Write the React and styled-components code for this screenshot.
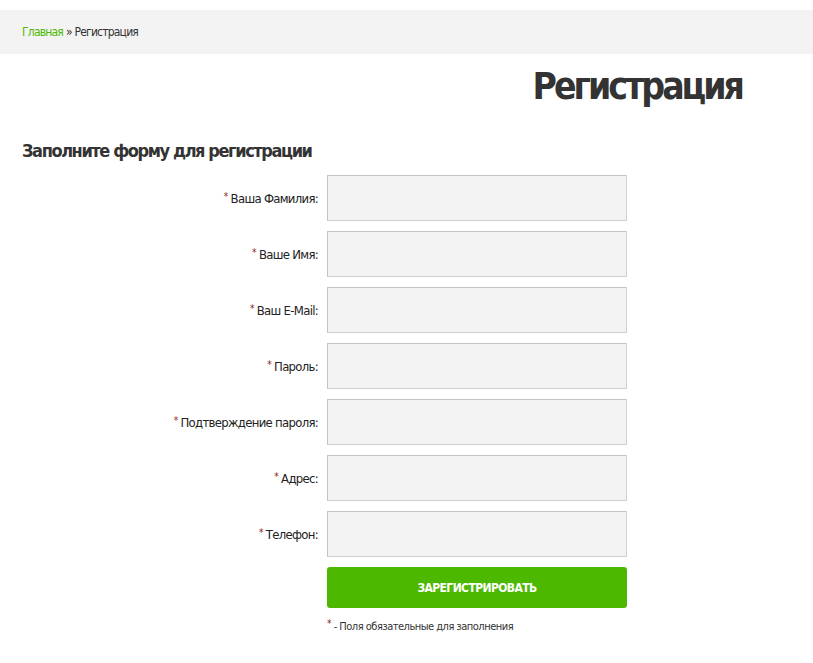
import styled, { createGlobalStyle } from "styled-components";

const GlobalStyle = createGlobalStyle`
  body {
    margin: 0;
    background: #fff;
    font-family: "DejaVu Sans", sans-serif;
    font-stretch: condensed;
    color: #333;
  }
`;

const fields = [
  "Ваша Фамилия:",
  "Ваше Имя:",
  "Ваш E-Mail:",
  "Пароль:",
  "Подтверждение пароля:",
  "Адрес:",
  "Телефон:",
];

function App() {
  return (
    <Page>
      <GlobalStyle />
      <Breadcrumbs>
        <a href="#">Главная</a> » Регистрация
      </Breadcrumbs>
      <Title>Регистрация</Title>
      <SubTitle>Заполните форму для регистрации</SubTitle>
      <Form>
        {fields.map((label) => (
          <Row key={label}>
            <Label>
              <Star>*</Star> {label}
            </Label>
            <Input type="text" />
          </Row>
        ))}
        <Row>
          <span />
          <Submit type="button">Зарегистрировать</Submit>
        </Row>
        <Row>
          <span />
          <Note>
            <Star>*</Star> - Поля обязательные для заполнения
          </Note>
        </Row>
      </Form>
    </Page>
  );
}

const Page = styled.div`
  padding-top: 10px;
`;

const Breadcrumbs = styled.div`
  background: #f3f3f3;
  height: 44px;
  padding: 0 22px;
  display: flex;
  align-items: center;
  gap: 3px;
  font-size: 12px;
  letter-spacing: -0.8px;
  color: #333;
  a {
    color: #4cb800;
    text-decoration: none;
  }
`;

const Title = styled.h1`
  margin: 8px 71px 0 0;
  text-align: right;
  font-size: 37px;
  letter-spacing: -3px;
  line-height: 50px;
  font-weight: bold;
  color: #333;
`;

const SubTitle = styled.h2`
  margin: 26px 0 0 22px;
  font-size: 18px;
  letter-spacing: -1.4px;
  line-height: 26px;
  font-weight: bold;
  color: #333;
`;

const Form = styled.div`
  margin-top: 11px;
  display: flex;
  flex-direction: column;
  gap: 10px;
`;

const Row = styled.div`
  display: grid;
  grid-template-columns: 318px 300px;
  column-gap: 9px;
  align-items: center;
`;

const Label = styled.label`
  text-align: right;
  font-size: 13px;
  letter-spacing: -0.7px;
  color: #222;
`;

const Star = styled.span`
  color: #8b1a1a;
  font-size: 10px;
  vertical-align: 3px;
`;

const Input = styled.input`
  box-sizing: border-box;
  width: 300px;
  height: 46px;
  margin: 0;
  background: #f3f3f3;
  border: 1px solid #d0d0d0;
  border-top-color: #c4c4c4;
  border-left-color: #c4c4c4;
`;

const Submit = styled.button`
  width: 300px;
  height: 41px;
  border: none;
  border-radius: 3px;
  background: #4cb800;
  color: #fff;
  font-family: inherit;
  font-stretch: condensed;
  font-weight: bold;
  font-size: 12px;
  letter-spacing: -0.6px;
  text-transform: uppercase;
`;

const Note = styled.div`
  font-size: 11px;
  letter-spacing: -0.5px;
  color: #333;
`;

export default App;
